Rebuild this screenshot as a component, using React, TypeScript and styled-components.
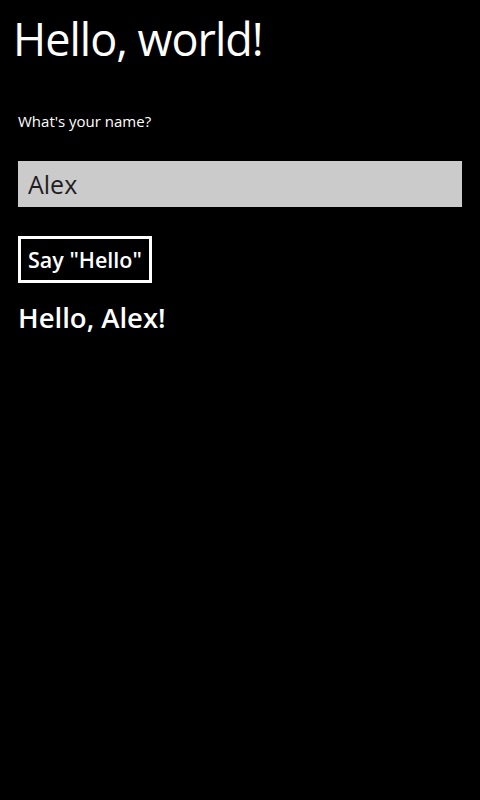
import React from "react";
import styled, { createGlobalStyle } from "styled-components";

const Global = createGlobalStyle`
  html, body { margin: 0; padding: 0; background: #000; }
  body { font-family: "Open Sans", "Noto Sans", sans-serif; color: #fff; }
`;

const Page = styled.div`
  width: 480px;
  height: 800px;
  background: #000;
  display: flex;
  flex-direction: column;
  box-sizing: border-box;
  padding: 0 18px;
`;

const Title = styled.h1`
  margin: 11px 0 0 -5px;
  font-size: 45px;
  font-weight: 400;
  line-height: 56px;
  letter-spacing: -1px;
`;

const Label = styled.div`
  margin-top: 44px;
  font-size: 15px;
  line-height: 20px;
`;

const Input = styled.input`
  margin-top: 30px;
  height: 46px;
  box-sizing: border-box;
  border: none;
  outline: none;
  background: #cbcbcb;
  color: #1e1e1e;
  padding: 0 10px;
  font-family: inherit;
  font-size: 25px;
`;

const Button = styled.button`
  margin-top: 29px;
  align-self: flex-start;
  height: 47px;
  box-sizing: border-box;
  border: 3px solid #fff;
  background: transparent;
  color: #fff;
  padding: 0 7px;
  font-family: inherit;
  font-size: 21.5px;
  font-weight: 600;
`;

const Greeting = styled.div`
  margin-top: 17px;
  font-size: 27.5px;
  font-weight: 600;
  line-height: 36px;
`;

export default function App() {
  return (
    <>
      <Global />
      <Page>
        <Title>Hello, world!</Title>
        <Label>What's your name?</Label>
        <Input defaultValue="Alex" />
        <Button>Say "Hello"</Button>
        <Greeting>Hello, Alex!</Greeting>
      </Page>
    </>
  );
}
